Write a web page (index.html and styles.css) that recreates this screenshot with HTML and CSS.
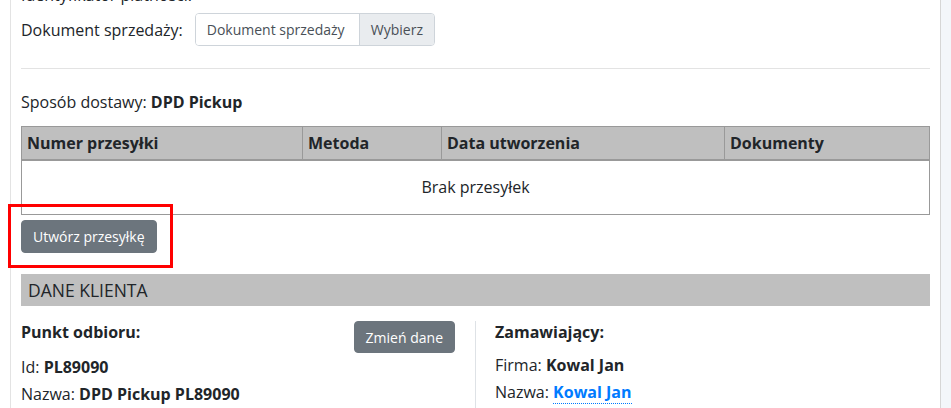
FILE: index.html
```html
<!DOCTYPE html>
<html lang="pl">
<head>
<meta charset="utf-8">
<link rel="stylesheet" href="styles.css">
</head>
<body>
<div class="page">
  <main class="card">
    <div class="row-cut">Identyfikator płatności:</div>
    <div class="doc-row">
      <span class="doc-label">Dokument sprzedaży:</span>
      <div class="input-group">
        <span class="input">Dokument sprzedaży</span>
        <span class="addon">Wybierz</span>
      </div>
    </div>
    <hr class="sep">
    <div class="delivery">Sposób dostawy: <b>DPD Pickup</b></div>
    <table class="ship">
      <thead>
        <tr>
          <th class="c1">Numer przesyłki</th>
          <th class="c2">Metoda</th>
          <th class="c3">Data utworzenia</th>
          <th class="c4">Dokumenty</th>
        </tr>
      </thead>
      <tbody>
        <tr><td colspan="4" class="empty">Brak przesyłek</td></tr>
      </tbody>
    </table>
    <div class="create-wrap">
      <button class="btn">Utwórz przesyłkę</button>
      <span class="highlight"></span>
    </div>
    <div class="bar">DANE KLIENTA</div>
    <div class="cols">
      <div class="col left">
        <div class="head-row">
          <span class="head">Punkt odbioru:</span>
          <button class="btn btn-sm">Zmień dane</button>
        </div>
        <p class="line">Id: <b>PL89090</b></p>
        <p class="line">Nazwa: <b>DPD Pickup PL89090</b></p>
      </div>
      <div class="col right">
        <div class="head-row2"><span class="head">Zamawiający:</span></div>
        <p class="line">Firma: <b>Kowal Jan</b></p>
        <p class="line">Nazwa: <a class="link" href="#">Kowal Jan</a></p>
      </div>
    </div>
  </main>
  <aside class="side"></aside>
</div>
</body>
</html>
```
FILE: styles.css
```css
* { box-sizing: border-box; }
html, body { margin: 0; padding: 0; }
body {
  font-family: "Open Sans", "Liberation Sans", sans-serif;
  font-size: 16px;
  color: #212529;
  background: #fff;
  overflow: hidden;
  height: 408px;
}
.page {
  display: flex;
  height: 408px;
}
.card {
  margin-left: 10px;
  width: 930px;
  border-left: 1px solid #e3e3e3;
  padding: 0 10px;
  flex: none;
}
.side {
  flex: 1;
  border-left: 1px solid #d6d6d6;
  background: #f3f6fa;
}
.row-cut {
  line-height: 22px;
  margin-top: -16px;
  height: 22px;
}
.doc-row {
  display: flex;
  align-items: center;
  gap: 12px;
  margin-top: 7px;
}
.input-group {
  display: flex;
  height: 33px;
  border: 1px solid #ced4da;
  border-radius: 4px;
  overflow: hidden;
  font-size: 14px;
  color: #495057;
}
.input {
  display: flex;
  align-items: center;
  padding: 0 11px;
  width: 163px;
  background: #fff;
}
.addon {
  display: flex;
  align-items: center;
  padding: 0 11px;
  background: #e9ecef;
  border-left: 1px solid #ced4da;
}
.sep {
  border: 0;
  border-top: 1px solid #e3e3e3;
  margin: 22px 0 0;
}
.delivery {
  margin-top: 22px;
  line-height: 22px;
}
.ship {
  width: 100%;
  margin-top: 13px;
  border-collapse: collapse;
  border: 1px solid #999;
}
.ship th {
  background: #bfbfbf;
  text-align: left;
  font-weight: 700;
  padding: 0 5px;
  height: 33px;
  border-left: 1px solid #999;
  border-bottom: 2px solid #999;
}
.c1 { width: 281px; }
.c2 { width: 139px; }
.c3 { width: 283px; }
.empty {
  text-align: center;
  height: 55px;
  padding: 0;
}
.create-wrap {
  position: relative;
  margin-top: 5px;
  display: flex;
}
.btn {
  font-family: inherit;
  font-size: 14px;
  line-height: 21px;
  color: #fff;
  background: #6c757d;
  border: 1px solid #6c757d;
  border-radius: 4px;
  padding: 5px 11px;
  height: 33px;
}
.highlight {
  position: absolute;
  left: -13px;
  top: -16px;
  width: 165px;
  height: 64px;
  border: 3px solid #ff0000;
}
.bar {
  margin-top: 21px;
  background: #bfbfbf;
  height: 32px;
  line-height: 32px;
  padding-left: 7px;
  font-size: 17.5px;
}
.cols {
  display: flex;
  margin-top: 15px;
}
.col.left {
  width: 455px;
  padding-right: 20px;
  border-right: 1px solid #dee2e6;
}
.col.right {
  padding-left: 19px;
}
.head-row {
  display: flex;
  justify-content: space-between;
  align-items: flex-start;
}
.head-row2 { height: 33px; }
.head {
  font-weight: 700;
  line-height: 22px;
}
.btn-sm {
  height: 32px;
  padding: 4px 11px;
}
.line {
  margin: 0;
  line-height: 22px;
  margin-bottom: 5px;
}
.col.left .line:first-of-type { margin-top: 3px; }
.link {
  color: #007bff;
  font-weight: 700;
  text-decoration: none;
  border-bottom: 1px dotted #007bff;
}
```
